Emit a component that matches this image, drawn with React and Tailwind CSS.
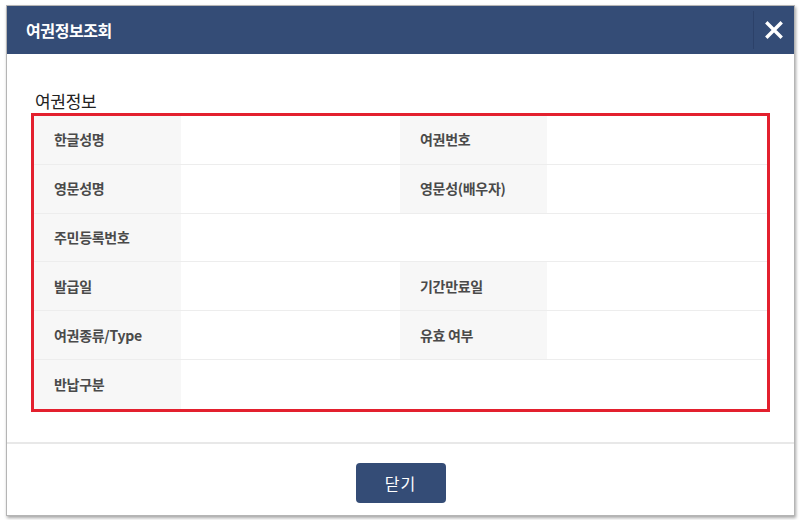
import React from "react";

const font = {
  fontFamily: '"Noto Sans CJK KR", "Noto Sans", sans-serif',
};

const rows = [
  [
    { label: "한글성명", value: "" },
    { label: "여권번호", value: "" },
  ],
  [
    { label: "영문성명", value: "" },
    { label: "영문성(배우자)", value: "" },
  ],
  [{ label: "주민등록번호", value: "", wide: true }],
  [
    { label: "발급일", value: "" },
    { label: "기간만료일", value: "" },
  ],
  [
    { label: "여권종류/Type", value: "" },
    { label: "유효 여부", value: "" },
  ],
  [{ label: "반납구분", value: "", wide: true }],
];

const Label = ({ children }) => (
  <div className="bg-[#f7f7f7] pl-[20px] flex items-center text-[14px] font-bold text-[#4a4a4a] tracking-[-0.3px]">
    {children}
  </div>
);

const PassportInfoDialog = () => {
  return (
    <div className="w-[801px] h-[520px] bg-white pl-[6px] pt-[5px]" style={font}>
      <div className="w-[789px] h-[511px] flex flex-col bg-white border border-[#b5b5b5] shadow-[1px_2px_3px_rgba(0,0,0,0.35)]">
        {/* header */}
        <div className="h-[48px] bg-[#344c76] flex items-center justify-between">
          <h2 className="pl-[19px] text-[16px] font-bold text-white tracking-[-0.4px]">
            여권정보조회
          </h2>
          <div className="h-[38px] w-[41px] border-l border-[#2c4169] flex items-center justify-center">
            <svg width="18" height="18" viewBox="0 0 18 18">
              <path
                d="M2.5 2.5 L15.5 15.5 M15.5 2.5 L2.5 15.5"
                stroke="#ffffff"
                strokeWidth="3.4"
                strokeLinecap="square"
              />
            </svg>
          </div>
        </div>

        {/* body */}
        <div className="pt-[35px] pb-[30px] pl-[24px]">
          <h3 className="h-[24px] leading-[24px] pl-[4px] text-[17px] text-[#222] tracking-[-0.3px]">
            여권정보
          </h3>
          <div className="w-[739px] border-[3px] border-[#e3202e]">
            {rows.map((row, i) => (
              <div
                key={i}
                className={
                  "grid grid-cols-[147px_219px_147px_1fr] h-[48.8px] " +
                  (i < rows.length - 1 ? "border-b border-[#ededed]" : "")
                }
              >
                {row.map((cell) => (
                  <React.Fragment key={cell.label}>
                    <Label>{cell.label}</Label>
                    <div
                      className={
                        "flex items-center pl-[12px] text-[13px] text-[#333] " +
                        (cell.wide ? "col-span-3" : "")
                      }
                    >
                      {cell.value}
                    </div>
                  </React.Fragment>
                ))}
              </div>
            ))}
          </div>
        </div>

        {/* footer */}
        <div className="border-t-2 border-[#e8e8e8] pt-[19px] flex justify-center">
          <button
            type="button"
            className="w-[90px] h-[40px] rounded-[4px] bg-[#344c76] text-white text-[16px] tracking-[1px]"
          >
            닫기
          </button>
        </div>
      </div>
    </div>
  );
};

export default function App() {
  return <PassportInfoDialog />;
}
